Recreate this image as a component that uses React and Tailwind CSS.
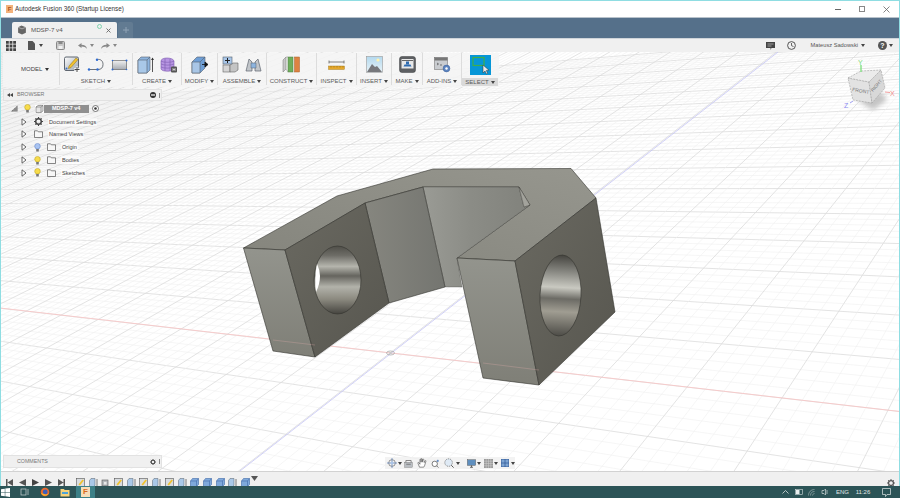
import React from 'react'

const FONT = { fontFamily: '"Liberation Sans", Arial, sans-serif' }

// ground plane: two vanishing points + origin, grid spacing in "major" cells
const VA = [-1020, 191]
const VB = [1251, -318]
const O = [390, 353]
const A = 0.0435
const B = 0.054

function project(u, v) {
  const w = 1 - A * u + B * v
  return [(O[0] - A * u * VA[0] + B * v * VB[0]) / w, (O[1] - A * u * VA[1] + B * v * VB[1]) / w]
}

function buildGrid() {
  const lines = []
  for (let i = -30; i <= 80; i++) {
    const v = i / 5
    const p = project(0, v)
    const t = (1000 - VA[0]) / (p[0] - VA[0])
    lines.push({ k: 'a' + i, x1: VA[0], y1: VA[1], x2: 1000, y2: VA[1] + t * (p[1] - VA[1]), major: i % 5 === 0 })
  }
  for (let i = -300; i <= 40; i++) {
    const u = i / 5
    const p = project(u, 0)
    const t = (600 - VB[1]) / (p[1] - VB[1])
    lines.push({ k: 'b' + i, x1: VB[0], y1: VB[1], x2: VB[0] + t * (p[0] - VB[0]), y2: 600, major: i % 5 === 0 })
  }
  return lines
}

const GRID = buildGrid()

function Caret({ className = 'ml-[2px]', color = '#444' }) {
  return (
    <svg width="4" height="3" viewBox="0 0 4 3" className={className}>
      <path d="M0 0h4L2 3z" fill={color} />
    </svg>
  )
}

function Scene() {
  return (
    <svg className="absolute -left-px top-0" width="900" height="419" viewBox="0 52 900 419">
      <defs>
        <linearGradient id="top" x1="0" y1="1" x2="1" y2="0">
          <stop offset="0" stopColor="#85857d" />
          <stop offset="1" stopColor="#96968e" />
        </linearGradient>
        <linearGradient id="front" x1="0" y1="0" x2="0" y2="1">
          <stop offset="0" stopColor="#93948d" />
          <stop offset="1" stopColor="#7f7f77" />
        </linearGradient>
        <linearGradient id="dark" x1="0" y1="0" x2="1" y2="1">
          <stop offset="0" stopColor="#6a6961" />
          <stop offset="1" stopColor="#57564f" />
        </linearGradient>
        <linearGradient id="inner1" x1="0" y1="0" x2="1" y2="0">
          <stop offset="0" stopColor="#86867f" />
          <stop offset="1" stopColor="#747570" />
        </linearGradient>
        <linearGradient id="inner2" x1="0" y1="0" x2="1" y2="0">
          <stop offset="0" stopColor="#9a9b95" />
          <stop offset="0.45" stopColor="#8b8c86" />
          <stop offset="1" stopColor="#81827c" />
        </linearGradient>
        <linearGradient id="holeL" x1="0" y1="0" x2="0" y2="1">
          <stop offset="0" stopColor="#4f4e48" />
          <stop offset="0.14" stopColor="#6e6d67" />
          <stop offset="0.3" stopColor="#b5b5ad" />
          <stop offset="0.44" stopColor="#65645e" />
          <stop offset="0.6" stopColor="#b2b2aa" />
          <stop offset="0.78" stopColor="#8c8a80" />
          <stop offset="1" stopColor="#45443f" />
        </linearGradient>
        <linearGradient id="holeR" x1="0" y1="0" x2="0" y2="1">
          <stop offset="0" stopColor="#45443f" />
          <stop offset="0.2" stopColor="#85857f" />
          <stop offset="0.4" stopColor="#c9c9c1" />
          <stop offset="0.54" stopColor="#6c6b65" />
          <stop offset="0.7" stopColor="#a09d92" />
          <stop offset="1" stopColor="#4d4c47" />
        </linearGradient>
      </defs>
      <rect x="0" y="52" width="900" height="419" fill="#ffffff" />
      {GRID.map(l => (
        <line key={l.k} x1={l.x1} y1={l.y1} x2={l.x2} y2={l.y2} stroke={l.major ? '#dcdcdc' : '#f0f0f0'} strokeWidth={l.major ? 0.8 : 0.6} />
      ))}
      <line x1="0" y1="308" x2="900" y2="411.5" stroke="#fac4c4" strokeWidth="0.8" />
      <line x1="240" y1="471" x2="778" y2="52" stroke="#c4c4f6" strokeWidth="0.8" />

      <g stroke="#33332e" strokeWidth="0.6" strokeLinejoin="round">
        <polygon points="243.5,248 337,196 433,169 571,168.5 596,198 515,261 457,258 530,205 519,187 423,187 365,203 285,250" fill="url(#top)" />
        <polygon points="423,187 519,187 524,207 530,205 457,258 462,287 445,287" fill="url(#inner2)" strokeWidth="0.3" />
        <polygon points="519,187 530,205 524,207" fill="#a3a39c" strokeWidth="0.4" />
        <polygon points="365,203 423,187 445,287 389,303" fill="url(#inner1)" />
        <polygon points="243.5,248 285,250 315,357 273,351" fill="url(#front)" />
        <polygon points="285,250 365,203 389,303 315,357" fill="url(#dark)" />
        <polygon points="457,258 515,261 539,385 483,378" fill="url(#front)" />
        <polygon points="515,261 596,198 615,312 539,385" fill="url(#dark)" />
        <ellipse cx="337.5" cy="280" rx="23.5" ry="34" fill="url(#holeL)" />
        <ellipse cx="560.5" cy="295.5" rx="20.5" ry="40.5" transform="rotate(3 560.5 295.5)" fill="url(#holeR)" />
      </g>
      <path d="M317 264 Q314 278 316 292 Q320 284 320 276 Q320 270 317 264z" fill="#ffffff" />
      <line x1="273" y1="340" x2="315" y2="345" stroke="#f8b8b8" strokeWidth="0.7" opacity="0.35" />
      <line x1="483" y1="363" x2="539" y2="370" stroke="#f8b8b8" strokeWidth="0.7" opacity="0.35" />
      <ellipse cx="390.5" cy="353" rx="4" ry="2" fill="none" stroke="#a0a0a0" strokeWidth="0.7" />
      <ellipse cx="390.5" cy="353" rx="1.6" ry="1" fill="#c8c8c8" />
    </svg>
  )
}

function ViewCube() {
  return (
    <svg className="absolute left-[839px] top-[6px]" width="60" height="58" viewBox="839 58 60 58">
      <defs>
        <filter id="cubeShadow"><feGaussianBlur stdDeviation="2.5" /></filter>
      </defs>
      <polygon points="856,100 880,92 886,100 872,110" fill="#c4c4c4" filter="url(#cubeShadow)" />
      <polygon points="847,78 868,82 871,103 852,100" fill="#e2e2e2" stroke="#a0a0a0" strokeWidth="0.6" strokeDasharray="2 1" />
      <polygon points="868,82 880,70 884,88 871,103" fill="#d8d8d8" stroke="#a0a0a0" strokeWidth="0.6" strokeDasharray="2 1" />
      <polygon points="847,78 860,71 880,70 868,82" fill="#ebebeb" stroke="#a0a0a0" strokeWidth="0.6" strokeDasharray="2 1" />
      <text x="851" y="91" fontSize="5" fill="#777" transform="rotate(10 851 91)" style={FONT}>FRONT</text>
      <text x="872" y="92" fontSize="4.6" fill="#777" transform="rotate(-50 872 92)" style={FONT}>RIGHT</text>
      <line x1="860" y1="65" x2="860" y2="72" stroke="#6fdc6f" strokeWidth="1.2" />
      <line x1="884" y1="92" x2="889" y2="92.5" stroke="#f2a0a0" strokeWidth="1" />
      <line x1="849" y1="103" x2="852" y2="101" stroke="#a0a0f2" strokeWidth="1" />
      <text x="857" y="65" fontSize="7" fill="#7ddc7d" style={FONT}>Y</text>
      <text x="889" y="96" fontSize="7" fill="#f08c8c" style={FONT}>X</text>
      <text x="843" y="108" fontSize="7" fill="#8c8cf0" style={FONT}>Z</text>
    </svg>
  )
}

/* ---------- ribbon icons ---------- */
function SketchIcon() {
  return (
    <svg width="17" height="17" viewBox="0 0 17 17">
      <defs><linearGradient id="sk" x1="0" y1="0" x2="1" y2="1"><stop offset="0" stopColor="#fff" /><stop offset="1" stopColor="#9aa3ad" /></linearGradient></defs>
      <rect x="0.5" y="1" width="14" height="13.5" rx="1.5" fill="url(#sk)" stroke="#5f6670" />
      <path d="M5 10L12 2l2 1.6-7 8-2.6.9z" fill="#f2c230" stroke="#8a6c14" strokeWidth="0.5" />
      <circle cx="2.5" cy="12.5" r="1" fill="#3c6fc4" />
      <path d="M13 10.5v6M10 13.5h6" stroke="#fff" strokeWidth="2.4" />
      <path d="M13 11v5M10.5 13.5h5" stroke="#444" strokeWidth="1" />
    </svg>
  )
}
function LineIcon() {
  return (
    <svg width="18" height="14" viewBox="0 0 18 14">
      <path d="M2 11.5h9M10 1.5c4-.6 6 1.600 6 5s-2 5-5 5" fill="none" stroke="#4a5058" strokeWidth="0.8" />
      <circle cx="2" cy="11.5" r="1.2" fill="#2f6bd0" />
      <circle cx="10.5" cy="11.5" r="1.2" fill="#2f6bd0" />
      <circle cx="10" cy="1.7" r="1.2" fill="#2f6bd0" />
    </svg>
  )
}
function RectIcon() {
  return (
    <svg width="17" height="12" viewBox="0 0 17 12">
      <defs><linearGradient id="rc" x1="0" y1="0" x2="0" y2="1"><stop offset="0" stopColor="#f0f0f0" /><stop offset="1" stopColor="#a6abb2" /></linearGradient></defs>
      <rect x="1.5" y="1.5" width="14" height="9" fill="url(#rc)" stroke="#555" strokeWidth="0.6" />
      <circle cx="1.5" cy="10.5" r="1" fill="#2f6bd0" />
      <circle cx="15.5" cy="1.5" r="1" fill="#2f6bd0" />
      <circle cx="1.5" cy="1.5" r="0.8" fill="#2f6bd0" />
      <circle cx="15.5" cy="10.5" r="0.8" fill="#2f6bd0" />
    </svg>
  )
}
function ExtrudeIcon() {
  return (
    <svg width="17" height="18" viewBox="0 0 17 18">
      <path d="M1 4l3-3h9v13l-3 3H1z" fill="#8db4de" stroke="#55606c" strokeWidth="0.6" />
      <path d="M1 4h9v13H1z" fill="#a9c8e8" stroke="#55606c" strokeWidth="0.6" />
      <path d="M10 4l3-3" stroke="#55606c" strokeWidth="0.6" />
      <path d="M15.5 16V2.500" stroke="#444" strokeWidth="0.9" />
      <path d="M14 4l1.500-2.500L17 4z" fill="#333" />
    </svg>
  )
}
function CoilIcon() {
  return (
    <svg width="17" height="17" viewBox="0 0 17 17">
      <path d="M1 5c0-4 12-4 13 0v8c-1 3-12 3-13 0z" fill="#b795e2" stroke="#7d5cb0" strokeWidth="0.6" />
      <path d="M1 8c3 1.500 10 1.500 13 0M1 11c3 1.500 10 1.500 13 0M1 5.200c3 1.500 10 1.500 13 0M5 2.500v12.500M10 2.500v12.500" fill="none" stroke="#7d5cb0" strokeWidth="0.6" />
      <rect x="11" y="10.5" width="6" height="6" rx="1" fill="#555" />
      <path d="M13 12v3M15 12v3M13 13.500h2" stroke="#fff" strokeWidth="0.6" />
    </svg>
  )
}
function ModifyIcon() {
  return (
    <svg width="18" height="18" viewBox="0 0 18 18">
      <path d="M1 6l5-5h8v11l-5 5H1z" fill="#6f9fd6" stroke="#55606c" strokeWidth="0.6" />
      <path d="M1 6h8v11H1z" fill="#a9c6e6" stroke="#55606c" strokeWidth="0.6" />
      <path d="M9 6l5-5" stroke="#55606c" strokeWidth="0.6" />
      <path d="M11 8.500l4 0M14 6l3 2.500-3 2.500z" fill="#111" stroke="#111" strokeWidth="0.8" />
    </svg>
  )
}
function AssembleIcon() {
  return (
    <svg width="17" height="17" viewBox="0 0 17 17">
      <rect x="1" y="9" width="7" height="7" fill="#d5d5d5" stroke="#666" strokeWidth="0.6" />
      <path d="M8 9l3 -2h5v7l-3 2H8z" fill="#c4c4c4" stroke="#666" strokeWidth="0.6" />
      <rect x="1" y="1" width="9" height="7" fill="#a8c6e8" stroke="#55606c" strokeWidth="0.6" />
      <path d="M5.500 2v5M3 4.500h5" stroke="#222" strokeWidth="1" />
    </svg>
  )
}
function JointIcon() {
  return (
    <svg width="17" height="17" viewBox="0 0 17 17">
      <path d="M1 15L4 3l3 3v9z" fill="#c2c6ca" stroke="#5f6670" strokeWidth="0.7" />
      <path d="M16 15L13 3l-3 3v9z" fill="#c2c6ca" stroke="#5f6670" strokeWidth="0.7" />
      <path d="M6 7h5v5H6z" fill="#8db4de" stroke="#55606c" strokeWidth="0.5" />
    </svg>
  )
}
function ConstructIcon() {
  return (
    <svg width="19" height="17" viewBox="0 0 19 17">
      <path d="M1 4l3-3v12l-3 3z" fill="#c8c8c8" stroke="#777" strokeWidth="0.5" />
      <rect x="6" y="1" width="5" height="15" fill="#6fae5c" stroke="#4d7d40" strokeWidth="0.5" />
      <rect x="12.5" y="1" width="5" height="15" fill="#dc8342" stroke="#a85f2a" strokeWidth="0.5" />
      <path d="M4 1l2 0M4 13l2 3" stroke="#888" strokeWidth="0.5" />
    </svg>
  )
}
function InspectIcon() {
  return (
    <svg width="17" height="10" viewBox="0 0 17 10">
      <path d="M1 2h15" stroke="#666" strokeWidth="0.8" />
      <path d="M1 .500v3M16 .500v3" stroke="#666" strokeWidth="0.8" />
      <rect x="0.5" y="6" width="16" height="3.5" fill="#e5a82c" stroke="#9a7218" strokeWidth="0.4" />
      <path d="M3 6v1.500M6 6v1.500M9 6v1.500M12 6v1.500M15 6v1.500" stroke="#8a6414" strokeWidth="0.5" />
    </svg>
  )
}
function InsertIcon() {
  return (
    <svg width="17" height="17" viewBox="0 0 17 17">
      <defs><linearGradient id="sky" x1="0" y1="0" x2="0" y2="1"><stop offset="0" stopColor="#b4d9ee" /><stop offset="1" stopColor="#e8f3f8" /></linearGradient></defs>
      <rect x="0.5" y="0.5" width="16" height="16" fill="url(#sky)" stroke="#999" strokeWidth="0.6" />
      <circle cx="12" cy="4" r="1.6" fill="#fff3b0" />
      <path d="M1 16l5-8 3 3 2-1 5 6z" fill="#77787c" />
    </svg>
  )
}
function MakeIcon() {
  return (
    <svg width="17" height="17" viewBox="0 0 17 17">
      <rect x="0.5" y="0.5" width="16" height="16" rx="2.5" fill="#5d5f62" stroke="#3f4042" strokeWidth="0.5" />
      <rect x="2.5" y="3" width="12" height="9.5" fill="#e8e8e8" />
      <path d="M4.500 10.500h8l-1-2h-6z" fill="#2f6bb0" />
      <path d="M7 5.500h3v3H7z" fill="#2f6bb0" />
      <path d="M3 4.500h11" stroke="#444" strokeWidth="0.8" />
    </svg>
  )
}
function AddInsIcon() {
  return (
    <svg width="17" height="16" viewBox="0 0 17 16">
      <rect x="0.5" y="0.5" width="13" height="12" fill="#c9ccd0" stroke="#666" strokeWidth="0.5" />
      <rect x="0.5" y="0.5" width="13" height="3" fill="#777" />
      <path d="M3 6l1.500 1L3 8M6 8h2" stroke="#333" strokeWidth="0.6" fill="none" />
      <circle cx="12.5" cy="11.5" r="3.4" fill="#5c84c0" stroke="#3a5c94" strokeWidth="0.5" />
      <circle cx="12.5" cy="11.5" r="1.2" fill="#fff" />
    </svg>
  )
}
function SelectIcon() {
  return (
    <svg width="21" height="20" viewBox="0 0 21 20">
      <rect width="21" height="20" fill="#0696d7" />
      <rect x="3" y="2.5" width="11" height="8" fill="none" stroke="#3fae49" strokeWidth="1.2" />
      <path d="M13 10l0 8 2-2 1.400 3 1.300-.6-1.400-3 2.700-.2z" fill="#e8e8e8" stroke="#333" strokeWidth="0.5" />
    </svg>
  )
}

const GROUPS = [
  { label: 'SKETCH', w: 'w-[73px]', gap: 'gap-[6px]', icons: [SketchIcon, LineIcon, RectIcon] },
  { label: 'CREATE', w: 'w-[49px]', gap: 'gap-[6px]', icons: [ExtrudeIcon, CoilIcon] },
  { label: 'MODIFY', w: 'w-[36px]', gap: 'gap-0', icons: [ModifyIcon] },
  { label: 'ASSEMBLE', w: 'w-[49px]', gap: 'gap-[6px]', icons: [AssembleIcon, JointIcon] },
  { label: 'CONSTRUCT', w: 'w-[50px]', gap: 'gap-0', icons: [ConstructIcon] },
  { label: 'INSPECT', w: 'w-[40px]', gap: 'gap-0', icons: [InspectIcon] },
  { label: 'INSERT', w: 'w-[35px]', gap: 'gap-0', icons: [InsertIcon] },
  { label: 'MAKE', w: 'w-[31px]', gap: 'gap-0', icons: [MakeIcon] },
  { label: 'ADD-INS', w: 'w-[39px]', gap: 'gap-0', icons: [AddInsIcon] },
]

function Ribbon() {
  return (
    <div className="flex h-[34px] w-[496px] ml-[2px] bg-[#f4f4f4]/85 text-[6px] text-[#5a5a5a]">
      <div className="w-[57px] flex items-center pl-[18px] border-r border-[#dcdcdc] mb-[2px]">
        <span className="text-[6px] text-[#444]">MODEL</span>
        <Caret className="ml-[3px]" color="#333" />
      </div>
      {GROUPS.map(g => (
        <div key={g.label} className={`${g.w} flex flex-col items-center border-r border-[#dcdcdc] mb-[2px]`}>
          <div className={`h-[24px] flex items-center ${g.gap}`}>
            {g.icons.map((Icon, i) => <Icon key={i} />)}
          </div>
          <div className="flex items-center h-[8px] leading-none mt-[1px]">
            {g.label}<Caret />
          </div>
        </div>
      ))}
      <div className="w-[36px] flex flex-col items-center">
        <div className="h-[24px] flex items-center"><SelectIcon /></div>
        <div className="flex items-center justify-center h-[8px] w-full bg-[#d9d9d9] leading-none mt-[1px]">
          SELECT<Caret />
        </div>
      </div>
    </div>
  )
}

/* ---------- browser tree ---------- */
function Expander() {
  return (
    <svg width="6" height="8" viewBox="0 0 6 8">
      <path d="M1 .8L5 4 1 7.200z" fill="#fff" stroke="#555" strokeWidth="0.9" strokeLinejoin="round" />
    </svg>
  )
}
function Bulb({ color = '#f7dc4c', edge = '#b59a1e' }) {
  return (
    <svg width="7" height="9" viewBox="0 0 7 9">
      <circle cx="3.5" cy="3.2" r="2.8" fill={color} stroke={edge} strokeWidth="0.5" />
      <rect x="2.2" y="6" width="2.6" height="2.5" fill="#777" />
    </svg>
  )
}
function Folder() {
  return (
    <svg width="9" height="8" viewBox="0 0 9 8">
      <path d="M.5 7.500V.8h3l.8 1h4.200v5.700z" fill="#f7f7f7" stroke="#555" strokeWidth="0.7" />
    </svg>
  )
}
function Gear({ size = 9, color = '#444' }) {
  return (
    <svg width={size} height={size} viewBox="0 0 10 10">
      <circle cx="5" cy="5" r="3.1" fill="none" stroke={color} strokeWidth="1.6" />
      <path d="M5 0v2M5 8v2M0 5h2M8 5h2M1.500 1.500l1.400 1.400M7.100 7.100l1.400 1.400M1.500 8.500l1.400-1.400M7.100 2.900l1.400-1.400" stroke={color} strokeWidth="1.2" />
    </svg>
  )
}

function PanelHeader({ title, arrows, icon, height }) {
  return (
    <div className={`flex items-center ${height} w-[159px] ml-[2px] bg-[#f0f0f0] border border-[#e2e2e2] text-[5.3px] text-[#777]`}>
      <div className="w-[13px] pl-[3px]">
        {arrows && <svg width="6" height="4" viewBox="0 0 6 4"><path d="M3 0v4L0 2zM6 0v4L3 2z" fill="#444" /></svg>}
      </div>
      <span>{title}</span>
      <div className="ml-auto flex items-center gap-[3px] pr-[1px]">
        {icon}
        <div className="w-[1px] h-[5px] bg-[#888]" />
      </div>
    </div>
  )
}

function TreeRow({ bulb, icon, label, iconWidth }) {
  return (
    <div className="flex items-center h-[12.8px] pl-[20px]">
      <div className="w-[13px] flex"><Expander /></div>
      {bulb && <div className="w-[13px] flex">{bulb}</div>}
      <div className={`${iconWidth} flex`}>{icon}</div>
      <span className="text-[5.6px] text-[#444] bg-white/60 px-[1px]">{label}</span>
    </div>
  )
}

function Browser() {
  return (
    <div className="mt-[2px]">
      <PanelHeader title="BROWSER" arrows height="h-[12px]" icon={
        <svg width="6" height="6" viewBox="0 0 6 6"><circle cx="3" cy="3" r="3" fill="#333" /><rect x="1" y="2.4" width="4" height="1.2" fill="#fff" /></svg>
      } />
      <div className="mt-[1.500px]">
        <div className="flex items-center h-[12.8px] pl-[10px]">
          <div className="w-[13px] flex">
            <svg width="7" height="7" viewBox="0 0 7 7"><path d="M0 6.500L6.500.5v6z" fill="#666" /><path d="M3 6.500V4M5 6.500V2" stroke="#fff" strokeWidth="0.5" /></svg>
          </div>
          <div className="w-[11px] flex"><Bulb /></div>
          <div className="flex items-center h-[8px] w-[54px] bg-[#8f8f8f]">
            <svg width="9" height="8" viewBox="0 0 9 8" className="bg-white shrink-0"><path d="M1 2l2-1.500h5v5.500L6 7.500H1z" fill="#e6e6e6" stroke="#555" strokeWidth="0.5" /><path d="M1 2h5v5.500M6 2l2-1.500" fill="none" stroke="#555" strokeWidth="0.5" /></svg>
            <span className="ml-[8px] text-[5.5px] font-bold text-white leading-none">MDSP-7 v4</span>
          </div>
          <svg width="7" height="7" viewBox="0 0 7 7" className="ml-[3px]"><circle cx="3.5" cy="3.5" r="3" fill="#fff" stroke="#444" strokeWidth="0.7" /><circle cx="3.5" cy="3.5" r="1.3" fill="#333" /></svg>
        </div>
        <TreeRow icon={<Gear />} label="Document Settings" iconWidth="w-[14px]" />
        <TreeRow icon={<Folder />} label="Named Views" iconWidth="w-[14px]" />
        <TreeRow bulb={<Bulb color="#a9c4f2" edge="#5e7fc4" />} icon={<Folder />} label="Origin" iconWidth="w-[14px]" />
        <TreeRow bulb={<Bulb />} icon={<Folder />} label="Bodies" iconWidth="w-[14px]" />
        <TreeRow bulb={<Bulb />} icon={<Folder />} label="Sketches" iconWidth="w-[14px]" />
      </div>
    </div>
  )
}

/* ---------- nav bar under the viewport ---------- */
function NavBar() {
  return (
    <div className="absolute left-[384px] bottom-[2px] w-[130px] h-[12px] flex items-center pl-[2px] bg-[#f0f0f0]/80">
      <svg width="10" height="10" viewBox="0 0 12 12"><circle cx="6" cy="6" r="4" fill="none" stroke="#666" strokeWidth="0.8" /><path d="M6 0v12M0 6h12" stroke="#5b7fb4" strokeWidth="0.9" /><circle cx="6" cy="6" r="1.6" fill="#a9c4e8" /></svg>
      <Caret className="ml-[1px]" />
      <svg width="9" height="9" viewBox="0 0 12 11" className="ml-[2px]"><rect x="1" y="4" width="10" height="6.500" fill="#b9bdc2" stroke="#666" strokeWidth="0.5" /><path d="M2.500 4V1.500h7V4" fill="none" stroke="#666" /><path d="M3 6.500h6" stroke="#666" /></svg>
      <svg width="10" height="10" viewBox="0 0 12 12" className="ml-[4px]"><path d="M3 11L1 6c0-1 1-1 1.500 0l1 1.500V2c0-1 1.300-1 1.300 0v3l.2-3.600c0-1 1.300-1 1.300 0V5l.5-3c0-1 1.300-1 1.300 0L8.700 5.500l.8-1.800c.5-1 1.500-.6 1.200.3L9 9.500 8 11z" fill="#fff" stroke="#444" strokeWidth="0.7" /></svg>
      <svg width="9" height="9" viewBox="0 0 12 12" className="ml-[4px]"><circle cx="5" cy="6.500" r="3.600" fill="#fff" stroke="#555" /><path d="M7.500 9l2.500 2.500" stroke="#555" /><path d="M9 1v3M7.500 2.500h3" stroke="#3f6fb4" /></svg>
      <svg width="10" height="10" viewBox="0 0 12 12" className="ml-[4px]"><circle cx="5.500" cy="5.500" r="4.500" fill="#dfeaf5" stroke="#777" strokeDasharray="1.500 1" /><path d="M8.700 8.700L11.500 11.500" stroke="#555" strokeWidth="1.200" /></svg>
      <Caret className="ml-[2px]" />
      <svg width="9" height="9" viewBox="0 0 12 11" className="ml-[7px]"><rect x="0.5" y="0.5" width="11" height="7.500" fill="#5f8fbf" stroke="#555" strokeWidth="0.6" /><path d="M4 10.500h4M6 8v2.500" stroke="#555" strokeWidth="1.200" /></svg>
      <Caret className="ml-[1px]" />
      <svg width="9" height="9" viewBox="0 0 11 11" className="ml-[3px]"><rect width="11" height="11" fill="#9a9a9a" /><path d="M2.700 0v11M5.500 0v11M8.300 0v11M0 2.700h11M0 5.500h11M0 8.300h11" stroke="#d4d4d4" strokeWidth="0.6" /></svg>
      <Caret className="ml-[1px]" />
      <svg width="8" height="8" viewBox="0 0 11 11" className="ml-[3px]"><rect x="0.5" y="0.5" width="10" height="10" fill="#7da4d2" stroke="#3f6aa8" /><path d="M5.500 0v11M0 5.500h11" stroke="#2f5a98" /></svg>
      <Caret className="ml-[2px]" />
    </div>
  )
}

/* ---------- timeline ---------- */
function TimelineChip({ kind }) {
  if (kind === 's') {
    return <svg width="9" height="9" viewBox="0 0 9 9"><rect x="0.5" y="0.5" width="8" height="8" fill="#d8dce0" stroke="#555" strokeWidth="0.6" /><path d="M2.500 6.500l4-5 1.400 1-4 5z" fill="#f0c22c" /></svg>
  }
  if (kind === 'e') {
    return <svg width="9" height="9" viewBox="0 0 9 9"><path d="M.5 2.500l1.500-2h4v7l-1.500 1h-4z" fill="#a9c8e8" stroke="#55606c" strokeWidth="0.5" /><path d="M8 8V1" stroke="#444" strokeWidth="0.7" /></svg>
  }
  if (kind === 'g') {
    return <svg width="9" height="9" viewBox="0 0 9 9"><rect x="1" y="2" width="6" height="6" fill="#b4b8bc" stroke="#555" strokeWidth="0.6" /><rect x="3" y="4" width="2.500" height="2.500" fill="#e8e8e8" /></svg>
  }
  return <svg width="9" height="9" viewBox="0 0 9 9"><path d="M.5 3l2-2.500h6v6L6.500 8.500h-6z" fill="#7fa9dc" stroke="#3f6aa8" strokeWidth="0.6" /><path d="M.5 3h6v5.500M6.500 3l2-2.500" fill="none" stroke="#3f6aa8" strokeWidth="0.6" /></svg>
}

function Timeline() {
  const chips = ['s', 'e', 'g', 's', 'e', 's', 'e', 's', 'e', 'm', 'm', 'm', 'e', 'm']
  return (
    <div className="relative h-[15px] flex items-end bg-[#f0f0f0] border-t border-[#d2d2d2] pl-[5px] overflow-hidden">
      <div className="flex items-center gap-[6px] h-[11px] -mb-[2px]">
        <svg width="7" height="7" viewBox="0 0 7 7"><path d="M0 0h1.500v7H0zM7 0v7L1.500 3.500z" fill="#555" /></svg>
        <svg width="7" height="7" viewBox="0 0 7 7"><path d="M7 0v7L0 3.500z" fill="#555" /></svg>
        <svg width="7" height="7" viewBox="0 0 7 7"><path d="M0 0v7l7-3.500z" fill="#444" /></svg>
        <svg width="7" height="7" viewBox="0 0 7 7"><path d="M0 0v7l7-3.500z" fill="#555" /></svg>
        <svg width="7" height="7" viewBox="0 0 7 7"><path d="M5.500 0H7v7H5.500zM0 0v7l5.500-3.500z" fill="#555" /></svg>
      </div>
      <div className="flex items-center gap-[3.700px] ml-[11px] h-[11px] -mb-[2px]">
        {chips.map((c, i) => <TimelineChip key={i} kind={c} />)}
      </div>
      <svg width="7" height="5" viewBox="0 0 7 5" className="absolute left-[250px] top-[4px]"><path d="M0 0h7L3.500 5z" fill="#555" /></svg>
      <div className="absolute right-[4px] -bottom-[1px]"><Gear size={8} color="#555" /></div>
    </div>
  )
}

function Taskbar() {
  return (
    <div className="h-[12px] bg-[#2c5457] flex items-center text-[6px] text-[#e2e8e8]">
      <svg width="9" height="9" viewBox="0 0 9 9" className="ml-[1px]"><path d="M0 1.300l3.800-.6v3.500H0zM4.300.6L9 0v4.200H4.300zM0 4.700h3.800v3.600L0 7.700zM4.300 4.700H9V9l-4.700-.7z" fill="#fff" /></svg>
      <svg width="9" height="8" viewBox="0 0 9 8" className="ml-[10px]"><rect x="1" y="1" width="5" height="6" fill="none" stroke="#cfd8d8" strokeWidth="0.7" /><path d="M8 1v6" stroke="#cfd8d8" strokeWidth="0.7" /></svg>
      <svg width="10" height="10" viewBox="0 0 10 10" className="ml-[11px]"><circle cx="5" cy="5" r="4.300" fill="#e9692c" /><circle cx="5.200" cy="5" r="2.400" fill="#3f5fb8" /><path d="M1 6c1 3 6 4 8 0-1 1-3 2-5 1z" fill="#f8b52e" /></svg>
      <svg width="10" height="9" viewBox="0 0 10 9" className="ml-[10px]"><path d="M.5 8.500V1h3.300l1 1h4.700v6.500z" fill="#f4d27a" /><rect x="2" y="4" width="6" height="2" fill="#4ba3d9" /></svg>
      <div className="ml-[6px] w-[19px] h-[12px] bg-[#3c8087] flex items-center justify-center">
        <div className="w-[9px] h-[10px] bg-[#f6ddb8] text-[#d86a1c] font-bold text-[8px] leading-[10px] text-center">F</div>
      </div>
      <div className="ml-auto flex items-center">
        <svg width="7" height="4" viewBox="0 0 7 4"><path d="M.5 3.500L3.500.5l3 3" fill="none" stroke="#d8e0e0" strokeWidth="0.8" /></svg>
        <svg width="8" height="6" viewBox="0 0 8 6" className="ml-[6px]"><rect x="0.5" y="0.5" width="7" height="5" fill="none" stroke="#d8e0e0" strokeWidth="0.6" /><rect x="1" y="1" width="3.500" height="4" fill="#e8eeee" /></svg>
        <svg width="7" height="8" viewBox="0 0 7 8" className="ml-[5px]"><path d="M.5 7.500C.5 4 3 1.500 6.500 1.500M2.500 7.500c0-2.500 1.500-4 4-4M4.500 7.500c0-1 1-2 2-2" fill="none" stroke="#9fb0b0" strokeWidth="0.7" /></svg>
        <svg width="8" height="8" viewBox="0 0 8 8" className="ml-[6px]"><path d="M3 2.500H1v3h2l1.500 1.500V1z" fill="none" stroke="#cfd8d8" strokeWidth="0.7" /><path d="M6 2v4" stroke="#cfd8d8" strokeWidth="0.7" /></svg>
        <span className="ml-[7px] w-[12px] text-center">ENG</span>
        <span className="ml-[7px] w-[16px] text-center">11:26</span>
        <svg width="9" height="9" viewBox="0 0 9 9" className="ml-[11px] mr-[9px]"><path d="M.5.5h8v6H5L3.500 8.500v-2h-3z" fill="none" stroke="#e2e8e8" strokeWidth="0.7" /></svg>
      </div>
    </div>
  )
}

export default function App() {
  return (
    <div className="w-[900px] h-[498px] flex flex-col overflow-hidden bg-white" style={FONT}>
      <div className="flex-1 flex flex-col min-h-0 border-x border-t border-[#8fdde2]">

        {/* Title bar */}
        <div className="h-[16px] flex items-center bg-white">
          <div className="ml-[5px] w-[7px] h-[8px] bg-[#f3b37c] text-[#a8521a] font-bold text-[6px] leading-[8px] text-center">F</div>
          <span className="ml-[2px] text-[6.3px] text-[#333]">Autodesk Fusion 360 (Startup License)</span>
          <div className="ml-auto flex items-center">
            <div className="w-[6px] h-px bg-[#666]" />
            <div className="ml-[18px] w-[6px] h-[6px] border border-[#888]" />
            <svg width="7" height="7" viewBox="0 0 7 7" className="ml-[18px] mr-[9px]"><path d="M.5.5l6 6M6.500.5l-6 6" stroke="#666" strokeWidth="0.8" /></svg>
          </div>
        </div>

        {/* Document tabs */}
        <div className="h-[21px] flex items-end bg-[#55708a] border-t border-[#b8c2cb] pl-[11px]">
          <div className="relative w-[105px] h-[16px] flex items-center bg-[#f0f0f0] rounded-t-[2px]">
            <svg width="10" height="10" viewBox="0 0 9 9" className="ml-[5px]"><path d="M1 2l3-1.500L8 2v5L4.500 8.500 1 7z" fill="#666" /><path d="M1 2l3.500 1.500L8 2" stroke="#ddd" strokeWidth="0.5" fill="none" /></svg>
            <span className="ml-[4px] text-[6.2px] text-[#555]">MDSP-7 v4</span>
            <div className="absolute left-[85px] top-[2px] w-[5px] h-[5px] rounded-full border border-[#7fd0ae]" />
            <svg width="5" height="5" viewBox="0 0 5 5" className="absolute right-[6px] top-[6px]"><path d="M.5.500l4 4M4.500.500l-4 4" stroke="#666" strokeWidth="0.9" /></svg>
          </div>
          <div className="ml-px w-[15px] h-[16px] bg-[#627b92] rounded-t-[2px] flex items-center justify-center">
            <svg width="6" height="6" viewBox="0 0 6 6"><path d="M3 0v6M0 3h6" stroke="#8fa3b5" strokeWidth="1" /></svg>
          </div>
        </div>

        {/* Quick access row */}
        <div className="h-[14px] flex items-center bg-[#f0f0f0] border-t border-[#cfd4d9]">
          <svg width="10" height="10" viewBox="0 0 10 10" className="ml-[5px]"><path d="M0 0h2.800v2.800H0zM3.600 0h2.800v2.800H3.600zM7.200 0H10v2.800H7.200zM0 3.600h2.800v2.800H0zM3.600 3.600h2.800v2.800H3.600zM7.200 3.600H10v2.800H7.200zM0 7.200h2.800V10H0zM3.600 7.200h2.800V10H3.600zM7.200 7.200H10V10H7.200z" fill="#444" /></svg>
          <svg width="7" height="9" viewBox="0 0 7 9" className="ml-[12px]"><path d="M0 0h4.500L7 2.500V9H0z" fill="#555" /></svg>
          <Caret className="ml-[4px]" />
          <svg width="9" height="9" viewBox="0 0 9 9" className="ml-[13px]"><rect x="0.500" y="0.500" width="8" height="8" rx="1" fill="#c8c8c8" stroke="#888" /><rect x="2.500" y="5" width="4" height="3" fill="#f0f0f0" /><rect x="2.500" y="1" width="4" height="2" fill="#888" /></svg>
          <svg width="9" height="6" viewBox="0 0 9 6" className="ml-[13px]"><path d="M0 2.500L3.500 0v1.800C6.500 1.800 8.500 3 9 6 7.500 4.200 6 3.500 3.500 3.500V5z" fill="#888" /></svg>
          <Caret className="ml-[3px]" color="#888" />
          <svg width="9" height="6" viewBox="0 0 9 6" className="ml-[7px]"><path d="M9 2.500L5.500 0v1.800C2.500 1.800.500 3 0 6c1.500-1.800 3-2.500 5.500-2.500V5z" fill="#888" /></svg>
          <Caret className="ml-[3px]" color="#888" />
          <div className="ml-auto flex items-center">
            <svg width="9" height="8" viewBox="0 0 9 8"><path d="M0 0h9v6H5.500L4.500 8V6H0z" fill="#444" /><path d="M1.500 2h6M1.500 4h4" stroke="#ddd" strokeWidth="0.6" /></svg>
            <svg width="9" height="9" viewBox="0 0 9 9" className="ml-[12px]"><circle cx="4.500" cy="4.500" r="3.900" fill="none" stroke="#444" strokeWidth="0.9" /><path d="M4.500 2v2.700L6.500 5.500" fill="none" stroke="#444" strokeWidth="0.8" /></svg>
            <span className="ml-[15px] text-[5.7px] text-[#555]">Mateusz Sadowski</span>
            <Caret className="ml-[3px]" />
            <div className="ml-[13px] w-[9px] h-[9px] rounded-full bg-[#555] text-white text-[7px] font-bold leading-[9px] text-center">?</div>
            <Caret className="ml-[2px] mr-[6px]" />
          </div>
        </div>

        {/* 3D viewport */}
        <div className="relative flex-1 min-h-0 overflow-hidden bg-white">
          <Scene />
          <ViewCube />
          <div className="absolute inset-0 flex flex-col pt-[1px] pb-[3px]">
            <Ribbon />
            <Browser />
            <div className="mt-auto">
              <PanelHeader title="COMMENTS" height="h-[13px]" icon={<Gear size={6} color="#333" />} />
            </div>
          </div>
          <NavBar />
        </div>

        <Timeline />
      </div>
      <Taskbar />
    </div>
  )
}
